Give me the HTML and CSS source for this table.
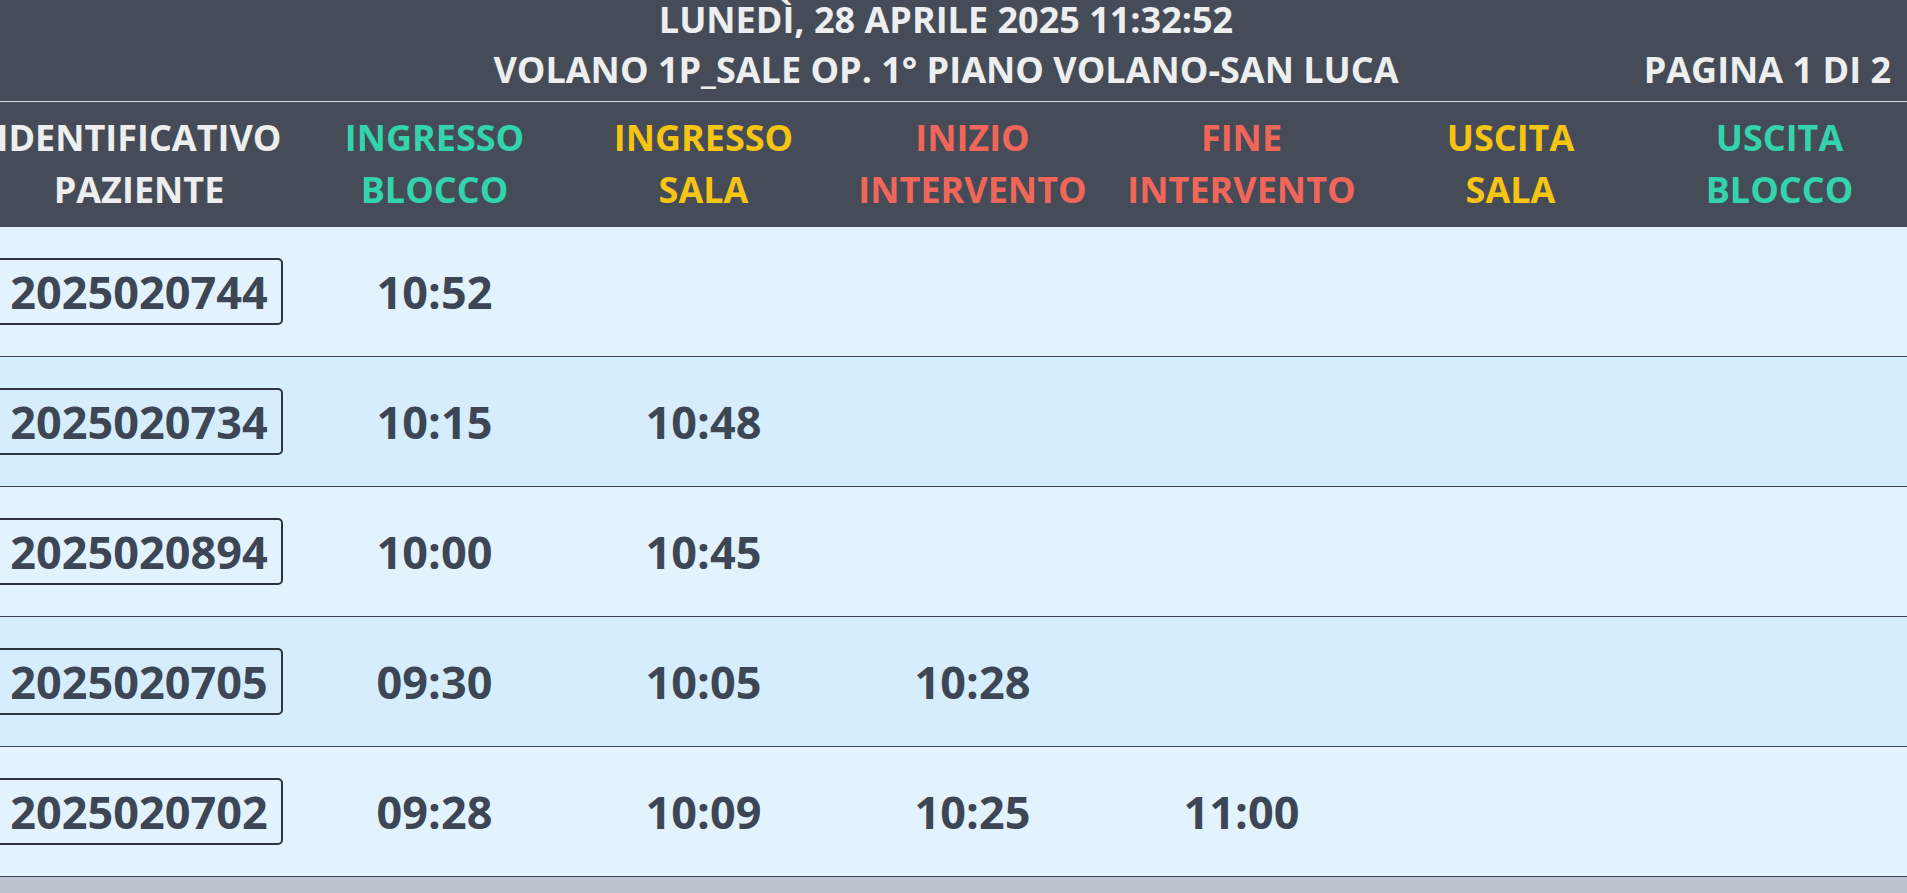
FILE: index.html
```html
<!DOCTYPE html>
<html lang="it">
<head>
<meta charset="utf-8">
<title>Tabellone Sale Operatorie</title>
<link rel="stylesheet" href="styles.css">
</head>
<body>
<div class="board">
  <header class="top">
    <div class="title-date">LUNEDÌ, 28 APRILE 2025 11:32:52</div>
    <div class="title-row">
      <span class="spacer"></span>
      <span class="title-place">VOLANO 1P_SALE OP. 1° PIANO VOLANO-SAN LUCA</span>
      <span class="page">PAGINA 1 DI 2</span>
    </div>
  </header>
  <div class="grid head">
    <div class="hcell white">IDENTIFICATIVO<br>PAZIENTE</div>
    <div class="hcell teal">INGRESSO<br>BLOCCO</div>
    <div class="hcell yellow">INGRESSO<br>SALA</div>
    <div class="hcell red">INIZIO<br>INTERVENTO</div>
    <div class="hcell red">FINE<br>INTERVENTO</div>
    <div class="hcell yellow">USCITA<br>SALA</div>
    <div class="hcell teal">USCITA<br>BLOCCO</div>
  </div>
  <div class="grid row odd">
    <div class="cell"><span class="id">2025020744</span></div>
    <div class="cell">10:52</div>
    <div class="cell"></div><div class="cell"></div><div class="cell"></div><div class="cell"></div><div class="cell"></div>
  </div>
  <div class="grid row even">
    <div class="cell"><span class="id">2025020734</span></div>
    <div class="cell">10:15</div>
    <div class="cell">10:48</div>
    <div class="cell"></div><div class="cell"></div><div class="cell"></div><div class="cell"></div>
  </div>
  <div class="grid row odd">
    <div class="cell"><span class="id">2025020894</span></div>
    <div class="cell">10:00</div>
    <div class="cell">10:45</div>
    <div class="cell"></div><div class="cell"></div><div class="cell"></div><div class="cell"></div>
  </div>
  <div class="grid row even">
    <div class="cell"><span class="id">2025020705</span></div>
    <div class="cell">09:30</div>
    <div class="cell">10:05</div>
    <div class="cell">10:28</div>
    <div class="cell"></div><div class="cell"></div><div class="cell"></div>
  </div>
  <div class="grid row odd">
    <div class="cell"><span class="id">2025020702</span></div>
    <div class="cell">09:28</div>
    <div class="cell">10:09</div>
    <div class="cell">10:25</div>
    <div class="cell">11:00</div>
    <div class="cell"></div><div class="cell"></div>
  </div>
</div>
</body>
</html>
```
FILE: styles.css
```css
html, body {
  margin: 0;
  padding: 0;
}
body {
  background: #bcc3cc;
  overflow: hidden;
  font-family: "Open Sans", "Noto Sans", sans-serif;
  font-weight: 700;
}
.board {
  width: 1936px;
  margin-left: -22px;
}
.top {
  background: #464c57;
  color: #eceeef;
  font-size: 36px;
  line-height: 51px;
  padding-bottom: 6px;
  border-bottom: 1px solid #d9dce0;
}
.title-date {
  text-align: center;
  margin-top: -6px;
}
.title-row {
  display: grid;
  grid-template-columns: 1fr auto 1fr;
  margin-top: -1px;
}
.title-place {
  text-align: center;
}
.page {
  justify-self: end;
  padding-right: 23px;
}
.grid {
  display: grid;
  grid-template-columns: 322px repeat(6, 269px);
}
.head {
  background: #464c57;
  padding: 10px 0 11px;
  font-size: 36px;
  line-height: 52px;
  text-align: center;
}
.white { color: #eceeef; }
.teal { color: #33d3ae; }
.yellow { color: #f6c512; }
.red { color: #f0675a; }
.row {
  height: 129px;
  border-bottom: 1px solid #3d4654;
  color: #3d4654;
  font-size: 45px;
}
.odd { background: #e3f3fe; }
.even { background: #d6edfd; }
.cell {
  display: flex;
  align-items: center;
  justify-content: center;
}
.id {
  display: inline-block;
  border: 2px solid #2e343d;
  border-radius: 5px;
  padding: 0 13px;
  line-height: 63px;
}
```
